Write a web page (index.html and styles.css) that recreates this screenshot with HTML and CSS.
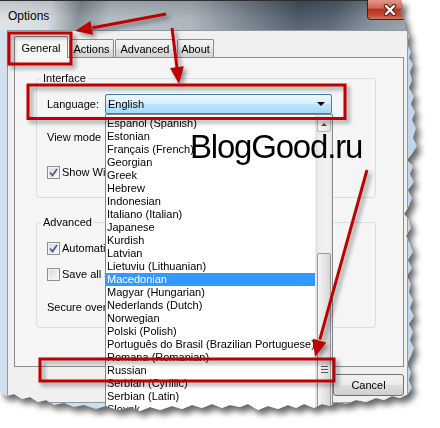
FILE: index.html
```html
<!DOCTYPE html>
<html lang="en">
<head>
    <meta charset="UTF-8">
    <title>Options</title>
    <link rel="stylesheet" href="styles.css">
</head>
<body>
    <div class="scene">
        <div class="paper">
            <div class="window">
                <div class="titlebar">
                    <span class="title">Options</span>
                    <div class="close-btn">
                        <svg width="14" height="12" viewBox="0 0 14 12">
                            <path d="M3 2 L11 10 M11 2 L3 10" stroke="#5b1c12" stroke-width="4.5" stroke-linecap="round"/>
                            <path d="M3 2 L11 10 M11 2 L3 10" stroke="#fff" stroke-width="2.4" stroke-linecap="round"/>
                        </svg>
                    </div>
                </div>

                <div class="client">
                    <div class="tabs">
                        <div class="tab active">General</div>
                        <div class="tab">Actions</div>
                        <div class="tab">Advanced</div>
                        <div class="tab">About</div>
                    </div>

                    <div class="tab-page">
                        <fieldset class="group">
                            <legend>Interface</legend>
                            <div class="group-body interface">
                                <div class="row">
                                    <label>Language:</label>
                                    <div class="combo focused">English<span class="arrow"></span></div>
                                </div>
                                <div class="row row-view">
                                    <label>View mode</label>
                                    <div class="combo"><span class="arrow"></span></div>
                                </div>
                                <div class="row row-show">
                                    <span class="check checked"></span><span class="text">Show Windows tray icon</span>
                                </div>
                            </div>
                        </fieldset>

                        <fieldset class="group group-advanced">
                            <legend>Advanced</legend>
                            <div class="group-body advanced">
                                <div class="row small">
                                    <span class="check checked"></span><span class="text">Automatically check for updates</span>
                                </div>
                                <div class="row small row-save">
                                    <span class="check"></span><span class="text">Save all settings on exit</span>
                                </div>
                                <div class="row small row-secure">
                                    <span class="text wide">Secure overwrite</span>
                                </div>
                            </div>
                        </fieldset>
                    </div>

                    <div class="buttons">
                        <button>OK</button>
                        <button>Cancel</button>
                    </div>
                </div>

                <!-- open language dropdown -->
                <div class="lang-list">
                    <div class="items">
                        <div class="item">Espanol (Spanish)</div>
                        <div class="item">Estonian</div>
                        <div class="item">Français (French)</div>
                        <div class="item">Georgian</div>
                        <div class="item">Greek</div>
                        <div class="item">Hebrew</div>
                        <div class="item">Indonesian</div>
                        <div class="item">Italiano (Italian)</div>
                        <div class="item">Japanese</div>
                        <div class="item">Kurdish</div>
                        <div class="item">Latvian</div>
                        <div class="item">Lietuviu (Lithuanian)</div>
                        <div class="item selected">Macedonian</div>
                        <div class="item">Magyar (Hungarian)</div>
                        <div class="item">Nederlands (Dutch)</div>
                        <div class="item">Norwegian</div>
                        <div class="item">Polski (Polish)</div>
                        <div class="item">Português do Brasil (Brazilian Portuguese)</div>
                        <div class="item">Romana (Romanian)</div>
                        <div class="item">Russian</div>
                        <div class="item">Serbian (Cyrillic)</div>
                        <div class="item">Serbian (Latin)</div>
                        <div class="item">Slovak</div>
                    </div>
                    <div class="scrollbar">
                        <div class="scroll-up"></div>
                        <div class="thumb"><div class="grip"></div></div>
                    </div>
                </div>
            </div>
        </div>

        <div class="watermark">BlogGood.ru</div>

        <!-- red marks on top of the dialog -->
        <svg class="marks" width="440" height="428" viewBox="0 0 440 428">
            <g fill="none" stroke="#c00000" stroke-width="3">
                <rect x="9" y="33" width="62" height="31"/>
                <rect x="28" y="85" width="317" height="33.5"/>
                <rect x="40" y="359" width="294" height="22"/>
                <line x1="166" y1="14" x2="92.7" y2="27.7"/>
                <line x1="172" y1="28" x2="177" y2="68"/>
                <line x1="367" y1="170" x2="319.8" y2="339.6"/>
            </g>
            <g fill="#c00000">
                <polygon points="75,31 90.4,21 93,34.8"/>
                <polygon points="179,84 170,68 183.8,66.3"/>
                <polygon points="315,357 312.8,338.7 326.3,342.5"/>
            </g>
        </svg>
    </div>
</body>
</html>
```

FILE: styles.css
```css
body {
    margin: 0;
    background: #fff;
    font-family: "Liberation Sans", Arial, sans-serif;
    font-size: 11px;
    color: #000;
    overflow: hidden;
}
.scene {
    position: relative;
    width: 440px;
    height: 428px;
    overflow: hidden;
}
.paper {
    width: 425px;
    height: 420px;
    filter: drop-shadow(4px 5px 3px rgba(0,0,0,0.6));
}
.window {
    position: relative;
    width: 425px;
    height: 420px;
    background: linear-gradient(90deg, #d3e0ed, #c1d5ea);
    clip-path: polygon(0 0, 401px 0, 403px 6px, 400px 12px, 404px 20px, 405px 28px, 409px 36px, 407px 44px, 411px 52px, 409px 58px, 413px 64px, 410px 72px, 412px 80px, 409px 88px, 414px 96px, 411px 104px, 415px 112px, 412px 120px, 416px 128px, 413px 138px, 417px 146px, 412px 154px, 407px 160px, 413px 166px, 410px 174px, 414px 182px, 408px 190px, 412px 198px, 409px 206px, 404px 214px, 409px 220px, 411px 228px, 406px 236px, 410px 244px, 413px 252px, 408px 260px, 412px 268px, 407px 276px, 411px 284px, 409px 292px, 413px 300px, 410px 308px, 414px 316px, 409px 324px, 413px 332px, 410px 340px, 414px 348px, 411px 356px, 407px 364px, 411px 372px, 409px 380px, 412px 388px, 408px 394px, 400px 398px, 392px 396px, 384px 400px, 376px 398px, 366px 402px, 356px 400px, 346px 404px, 336px 402px, 330px 406px, 322px 404px, 314px 408px, 304px 404px, 296px 408px, 288px 405px, 278px 409px, 268px 406px, 258px 410px, 248px 404px, 240px 407px, 230px 405px, 222px 408px, 212px 404px, 202px 408px, 192px 405px, 182px 409px, 172px 406px, 160px 410px, 150px 407px, 140px 411px, 130px 407px, 118px 410px, 106px 406px, 96px 409px, 84px 405px, 74px 407px, 64px 403px, 54px 405px, 46px 400px, 38px 402px, 30px 397px, 22px 399px, 14px 394px, 6px 396px, 0 392px);
}

/* title bar */
.titlebar {
    height: 30px;
    box-sizing: border-box;
    border-top: 1px solid #2b2f33;
    display: flex;
    align-items: flex-start;
    padding-left: 8px;
    background:
        linear-gradient(180deg, rgba(0,0,0,0.12), rgba(255,255,255,0.08) 60%, rgba(255,255,255,0.15)),
        linear-gradient(100deg, #dde1e4 0, #d2d7db 12%, #7d8892 19%, #aeb7bf 26%, #a4adb6 45%, #6d7985 58%, #414e5b 70%, #4b5866 78%, #7b8792 88%, #97a1aa 100%);
}
.title {
    font-size: 12px;
    line-height: 14px;
    margin-top: 8px;
}
.close-btn {
    margin-left: auto;
    margin-right: 12px;
    width: 46px;
    height: 20px;
    margin-top: -1px;
    box-sizing: border-box;
    border: 1px solid #4e1a14;
    border-top: 0;
    border-radius: 0 0 4px 4px;
    background: linear-gradient(#e3988b 0, #cf6a58 40%, #b8321f 50%, #c24a33 80%, #d5775d 100%);
    display: flex;
    justify-content: center;
    align-items: center;
}

/* client area */
.client {
    margin: 0 17px 0 7px;
    height: 373px;
    box-sizing: border-box;
    border: 1px solid #8d9aa8;
    background: #f0f0f0;
    padding: 5px 3px 0 6px;
}
.tabs {
    display: flex;
    align-items: flex-end;
    height: 21px;
    position: relative;
    z-index: 1;
}
.tab {
    height: 18px;
    box-sizing: border-box;
    border: 1px solid #898c95;
    border-bottom: 0;
    border-radius: 2px 2px 0 0;
    background: linear-gradient(#f3f3f3, #ebebeb 50%, #dedede 51%, #d4d4d4);
    display: flex;
    justify-content: center;
    align-items: center;
    padding-top: 1px;
    margin-right: 1px;
}
.tab:nth-child(2) { width: 45px; }
.tab:nth-child(3) { width: 60px; }
.tab:nth-child(4) { width: 37px; margin-left: 1px; }
.tab.active {
    width: 54px;
    height: 22px;
    margin-bottom: -1px;
    background: #f5f5f5;
    padding-top: 0;
}
.tab-page {
    height: 310px;
    box-sizing: border-box;
    border: 1px solid #898c95;
    background: #f5f5f5;
    padding: 13px 0 0 21px;
}

/* group boxes */
.group {
    margin: 0;
    padding: 0;
    width: 340px;
    box-sizing: border-box;
    border: 1px solid #d5dfe5;
    border-radius: 3px;
    min-width: 0;
}
.group legend {
    padding: 0 2px;
    margin-left: 4px;
    line-height: 14px;
}
.group-advanced {
    margin-top: 17px;
}
.group-body {
    padding-left: 10px;
}
.group-body.interface {
    padding-top: 9px;
    padding-bottom: 15px;
}
.group-body.advanced {
    padding-top: 11px;
    padding-bottom: 12px;
}
.row {
    display: flex;
    align-items: center;
    height: 20px;
    white-space: nowrap;
}
.row.small { height: 16px; }
.row-view { margin-top: 13px; }
.row-show { margin-top: 15px; }
.row-save { margin-top: 10px; }
.row-secure { margin-top: 17px; }
.row label {
    width: 58px;
}
/* the open list covers everything right of x=105 */
.row .text {
    width: 43px;
    overflow: hidden;
}
.row .text.wide {
    width: 58px;
}
.combo {
    position: relative;
    width: 227px;
    height: 20px;
    box-sizing: border-box;
    border: 1px solid #acacac;
    border-radius: 2px;
    background: linear-gradient(#f2f2f2, #ebebeb 50%, #dddddd 51%, #cfcfcf);
    padding-left: 2px;
    display: flex;
    align-items: center;
}
.combo.focused {
    border-color: #3c7fb1;
    background: linear-gradient(#eaf6fd, #d9f0fc 48%, #bee6fd 52%, #a7d9f5);
}
.combo .arrow {
    position: absolute;
    right: 6px;
    top: 7px;
    border-left: 4px solid transparent;
    border-right: 4px solid transparent;
    border-top: 4px solid #000;
}
.check {
    width: 13px;
    height: 13px;
    box-sizing: border-box;
    border: 1px solid #8e8f8f;
    background: linear-gradient(135deg, #dadada, #f8f8f8);
    margin-right: 2px;
    box-shadow: inset 0 0 0 1px #f4f4f4;
}
.check.checked {
    background:
        url("data:image/svg+xml;utf8,<svg xmlns='http://www.w3.org/2000/svg' width='11' height='11'><path d='M2 5.5 L4.5 8.5 L9 2' fill='none' stroke='%234a5f97' stroke-width='1.8'/></svg>") center no-repeat,
        linear-gradient(135deg, #dadada, #f8f8f8);
}

/* dialog buttons */
.buttons {
    display: flex;
    justify-content: flex-end;
    gap: 6px;
    margin-top: 7px;
}
.buttons button {
    width: 71px;
    height: 22px;
    border: 1px solid #707070;
    border-radius: 3px;
    background: linear-gradient(#f2f2f2, #ebebeb 50%, #dddddd 51%, #cfcfcf);
    font-family: "Liberation Sans", Arial, sans-serif;
    font-size: 11px;
    color: #000;
    padding: 0;
}

/* dropdown list */
.lang-list {
    position: absolute;
    left: 105px;
    top: 114px;
    width: 228px;
    height: 302px;
    box-sizing: border-box;
    border: 1px solid #828790;
    background: #fff;
    overflow: hidden;
    z-index: 2;
}
.items {
    width: 209px;
    padding-top: 2px;
}
.item {
    height: 13px;
    line-height: 13px;
    padding-left: 1px;
    white-space: nowrap;
    overflow: hidden;
}
.item.selected {
    background: #3399ff;
    color: #fff;
}
.scrollbar {
    position: absolute;
    right: 0;
    top: 0;
    bottom: 0;
    width: 17px;
    background: linear-gradient(90deg, #e2e2e2, #efefef 25%, #f2f2f2 75%, #e6e6e6);
    border-left: 1px solid #e9e9e9;
    box-sizing: border-box;
}
.scroll-up {
    position: absolute;
    left: 1px;
    right: 1px;
    top: 3px;
    height: 14px;
    box-sizing: border-box;
    border: 1px solid #b5b5b5;
    border-radius: 2px;
    background: linear-gradient(90deg, #f6f6f6, #e4e4e4);
}
.scroll-up::after {
    content: "";
    position: absolute;
    left: 3px;
    top: 4px;
    border-left: 3px solid transparent;
    border-right: 3px solid transparent;
    border-bottom: 3px solid #4d4d4d;
}
.thumb {
    position: absolute;
    left: 1px;
    right: 1px;
    top: 138px;
    height: 170px;
    box-sizing: border-box;
    border: 1px solid #979797;
    border-radius: 2px;
    background: linear-gradient(90deg, #f4f4f4, #e6e6e6 50%, #d6d6d6);
}
.grip {
    position: absolute;
    left: 3px;
    width: 7px;
    top: 112px;
    height: 7px;
    background: repeating-linear-gradient(#555 0 1px, #eee 1px 2px, transparent 2px 3px);
}

/* overlays */
.watermark {
    position: absolute;
    left: 190px;
    top: 130px;
    font-size: 33px;
    line-height: 33px;
    letter-spacing: -1.2px;
    color: #000;
    white-space: nowrap;
}
.marks {
    position: absolute;
    left: 0;
    top: 0;
    filter: drop-shadow(3px 3px 2px rgba(0,0,0,0.4));
}
```
